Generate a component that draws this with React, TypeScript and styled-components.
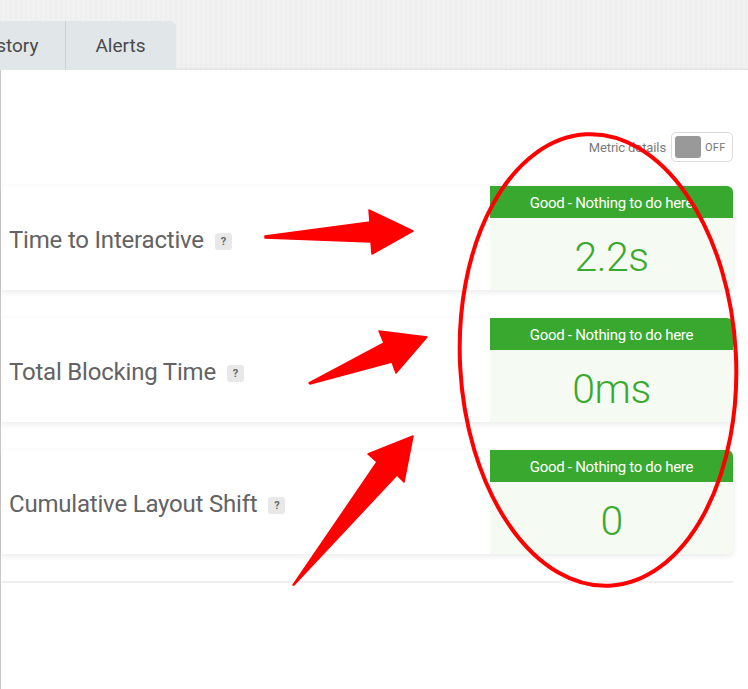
import styled, { createGlobalStyle } from "styled-components";

const GlobalStyle = createGlobalStyle`
  html, body {
    margin: 0;
    padding: 0;
    background: #ffffff;
  }
  body {
    font-family: Roboto, "Liberation Sans", sans-serif;
  }
`;

const Page = styled.div`
  position: relative;
  width: 748px;
  height: 689px;
  overflow: hidden;
  background: #ffffff;
`;

const TopBar = styled.div`
  height: 70px;
  display: flex;
  align-items: flex-end;
  background-color: #f1f1f1;
  background-image: repeating-linear-gradient(
    90deg,
    rgba(0, 0, 0, 0.012) 0px,
    rgba(0, 0, 0, 0.012) 2px,
    transparent 2px,
    transparent 5px
  );
  box-shadow: inset 0 -3px 3px -2px rgba(0, 0, 0, 0.08);
`;

const Tab = styled.div<{ $last?: boolean }>`
  height: 49px;
  display: flex;
  align-items: center;
  padding: ${(p) => (p.$last ? "0 31px 0 29px" : "0 28px")};
  background: #e1e6e9;
  color: #4a4a4a;
  font-size: 19px;
  border-right: ${(p) => (p.$last ? "none" : "1px solid #cdd2d5")};
  border-top-right-radius: ${(p) => (p.$last ? "6px" : "0")};
`;

const FirstTab = styled(Tab)`
  margin-left: -50px;
  padding-right: 27px;
`;

const Panel = styled.div`
  border-left: 1px solid #c9c9c9;
  height: 619px;
  padding-top: 62px;
  box-sizing: border-box;
`;

const DetailsRow = styled.div`
  display: flex;
  justify-content: flex-end;
  align-items: center;
  gap: 5px;
  padding-right: 15px;
  height: 30px;
`;

const DetailsLabel = styled.span`
  font-size: 13px;
  color: #7a7a7a;
  letter-spacing: -0.1px;
`;

const Toggle = styled.div`
  width: 62px;
  height: 30px;
  box-sizing: border-box;
  border: 1px solid #dcdcdc;
  border-radius: 5px;
  display: flex;
  align-items: center;
  padding: 0 3px;
  gap: 4px;
`;

const Knob = styled.span`
  width: 26px;
  height: 22px;
  border-radius: 3px;
  background: #999999;
`;

const ToggleText = styled.span`
  font-size: 11px;
  color: #777;
  letter-spacing: 0.3px;
`;

const Metrics = styled.div`
  margin-top: 24px;
  width: 732px;
  display: flex;
  flex-direction: column;
  gap: 28px;
`;

const Card = styled.div`
  display: flex;
  height: 104px;
  background: #ffffff;
  border-radius: 0 6px 6px 0;
  box-shadow: 0 2px 6px rgba(0, 0, 0, 0.09);
  overflow: hidden;
`;

const Label = styled.div`
  flex: 1;
  display: flex;
  align-items: center;
  gap: 11px;
  padding: 3px 0 0 8px;
  font-size: 24px;
  color: #636363;
  letter-spacing: -0.2px;
`;

const Help = styled.span`
  width: 17px;
  height: 17px;
  border-radius: 3px;
  background: #e8e8e8;
  color: #666;
  font-size: 11px;
  font-weight: 700;
  display: flex;
  align-items: center;
  justify-content: center;
  margin-top: 3px;
`;

const Score = styled.div`
  width: 243px;
  display: flex;
  flex-direction: column;
  background: #f5faf3;
`;

const ScoreHead = styled.div`
  height: 32px;
  display: flex;
  align-items: center;
  justify-content: center;
  padding-top: 2px;
  box-sizing: border-box;
  background: #39a82e;
  color: #ffffff;
  font-size: 15px;
  letter-spacing: -0.3px;
`;

const ScoreValue = styled.div`
  flex: 1;
  display: flex;
  align-items: center;
  justify-content: center;
  padding-top: 5px;
  color: #3aa92f;
  font-size: 41px;
  font-weight: 300;
  letter-spacing: -0.5px;
`;

const Divider = styled.div`
  margin-top: 27px;
  width: 732px;
  height: 2px;
  background: #efefef;
`;

const Marks = styled.svg`
  position: absolute;
  left: 0;
  top: 0;
  pointer-events: none;
`;

const metrics = [
  { name: "Time to Interactive", value: "2.2s" },
  { name: "Total Blocking Time", value: "0ms" },
  { name: "Cumulative Layout Shift", value: "0" },
];

const App = () => {
  return (
    <Page>
      <GlobalStyle />
      <TopBar>
        <FirstTab>History</FirstTab>
        <Tab $last>Alerts</Tab>
      </TopBar>
      <Panel>
        <DetailsRow>
          <DetailsLabel>Metric details</DetailsLabel>
          <Toggle>
            <Knob />
            <ToggleText>OFF</ToggleText>
          </Toggle>
        </DetailsRow>
        <Metrics>
          {metrics.map((m) => (
            <Card key={m.name}>
              <Label>
                {m.name}
                <Help>?</Help>
              </Label>
              <Score>
                <ScoreHead>Good - Nothing to do here</ScoreHead>
                <ScoreValue>{m.value}</ScoreValue>
              </Score>
            </Card>
          ))}
        </Metrics>
        <Divider />
      </Panel>
      <Marks width="748" height="689" viewBox="0 0 748 689">
        <g fill="#ff0000" stroke="#ff0000" strokeWidth="1.5" strokeLinejoin="round">
          <polygon points="265,236 370,222 369,210 413,231 372,254 371,242 265,238" />
          <polygon points="309,383 384,343 379,331 427,337 396,373 392,362 310,384" />
          <polygon points="293,585 377,462 368,454 413,436 404,482 397,475 294,585" />
        </g>
        <ellipse
          cx="598"
          cy="360"
          rx="138"
          ry="226"
          fill="none"
          stroke="#ff0000"
          strokeWidth="4"
          transform="rotate(-3 598 360)"
        />
      </Marks>
    </Page>
  );
};

export default App;
